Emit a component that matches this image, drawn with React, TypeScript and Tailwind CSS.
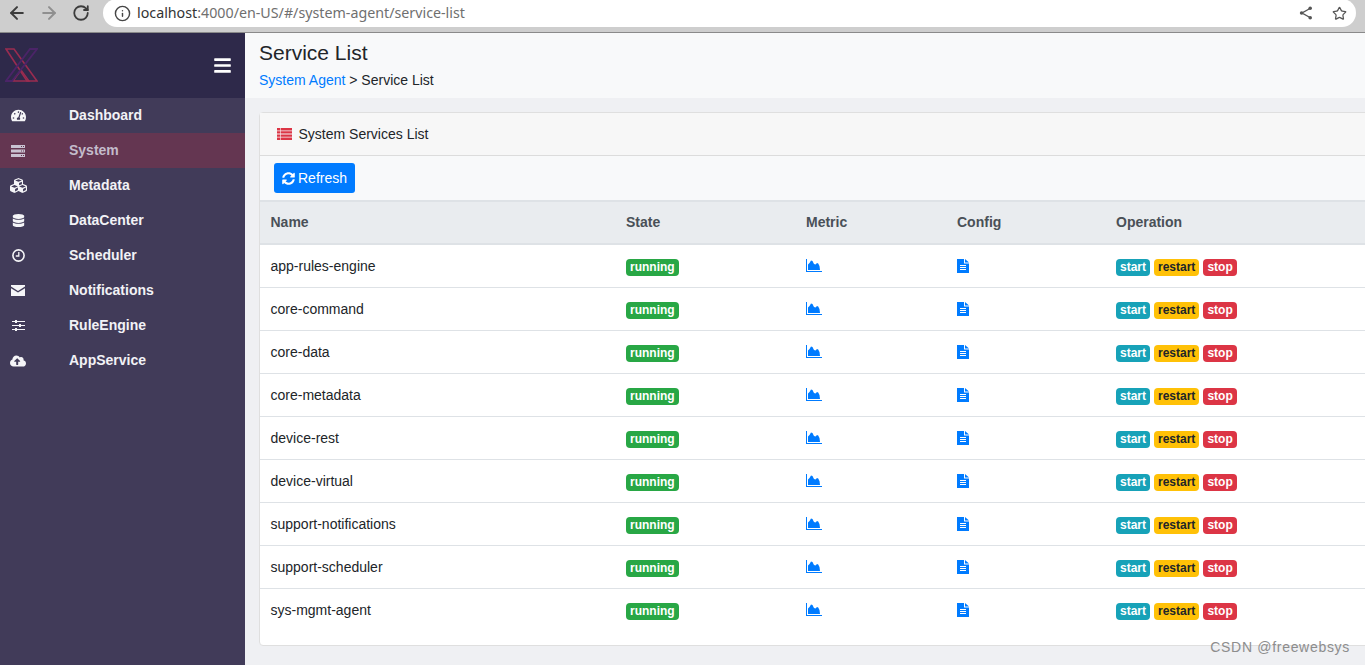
import React from 'react';
import {
  FaBars,
  FaCloudUploadAlt,
  FaCubes,
  FaDatabase,
  FaSyncAlt,
  FaTachometerAlt,
} from 'react-icons/fa';
import { ArrowLeft, ArrowRight, Info, RotateCw, Star } from 'lucide-react';

// font-awesome 4 style glyphs that the icon packages draw differently
function ServerIcon() {
  return (
    <svg viewBox="0 0 14 12" className="h-[12px] w-[14px]" fill="currentColor">
      <path fillRule="evenodd" d="M0 0h14v3H0zM10 1v1h1V1zM12 1v1h1V1zM0 4.5h14v3H0zM10 5.5v1h1v-1zM12 5.5v1h1v-1zM0 9h14v3H0zM10 10v1h1v-1zM12 10v1h1v-1z" />
    </svg>
  );
}

function ClockIcon() {
  return (
    <svg viewBox="0 0 13 13" className="h-[13px] w-[13px]" fill="none" stroke="currentColor">
      <circle cx="6.5" cy="6.5" r="5.6" strokeWidth="1.6" />
      <path d="M6.8 3v4H3.8" strokeWidth="1.3" />
    </svg>
  );
}

function EnvelopeIcon() {
  return (
    <svg viewBox="0 0 14 11" className="h-[11px] w-[14px]" fill="currentColor">
      <path d="M0 0h14v1.6L7 6 0 1.6zM0 3.2 7 7.6l7-4.4V11H0z" />
    </svg>
  );
}

function SlidersIcon() {
  return (
    <svg viewBox="0 0 13 11" className="h-[11px] w-[13px]" fill="currentColor">
      <path d="M0 1h3V0h2v1h8v1H5v1H3V2H0zM0 5h7V4h2v1h4v1H9v1H7V6H0zM0 9h3V8h2v1h8v1H5v1H3v-1H0z" />
    </svg>
  );
}

function ListIcon() {
  return (
    <svg viewBox="0 0 15 12" className="h-[12px] w-[15px]" fill="#dc3545">
      <path d="M0 0h3.4v2.4H0zM4 0h11v2.4H4zM0 3.2h3.4v2.4H0zM4 3.2h11v2.4H4zM0 6.4h3.4v2.4H0zM4 6.4h11v2.4H4zM0 9.6h3.4V12H0zM4 9.6h11V12H4z" />
    </svg>
  );
}

function AreaChartIcon() {
  return (
    <svg viewBox="0 0 16 13" className="h-[13px] w-[16px]" fill="#007bff">
      <path d="M0 0h1v12h15v1H0z" />
      <path d="M2 11V5.5l1.5-1.5L5 1.5 6.5 2l1.5 3 1.5.5L11 4l1.2.5 1.3 2.5.5 4z" />
    </svg>
  );
}

function FileIcon() {
  return (
    <svg viewBox="0 0 12 14" className="h-[14px] w-[12px]" fill="#007bff">
      <path fillRule="evenodd" d="M0 0h7v4.5h5V14H0zM3 6v1h6V6zM3 8v1h6V8zM3 10v1h6v-1z" />
      <path d="M8 0l4 3.5H8z" />
    </svg>
  );
}

const navItems = [
  { label: 'Dashboard', icon: <FaTachometerAlt size={15} /> },
  { label: 'System', icon: <ServerIcon />, active: true },
  { label: 'Metadata', icon: <FaCubes size={17} /> },
  { label: 'DataCenter', icon: <FaDatabase size={13} /> },
  { label: 'Scheduler', icon: <ClockIcon /> },
  { label: 'Notifications', icon: <EnvelopeIcon /> },
  { label: 'RuleEngine', icon: <SlidersIcon /> },
  { label: 'AppService', icon: <FaCloudUploadAlt size={16} /> },
];

const services = [
  'app-rules-engine',
  'core-command',
  'core-data',
  'core-metadata',
  'device-rest',
  'device-virtual',
  'support-notifications',
  'support-scheduler',
  'sys-mgmt-agent',
];

function Badge({ className, children }: { className: string; children: React.ReactNode }) {
  return (
    <span className={`inline-block h-[17px] rounded-[4px] px-[4px] text-[12px] font-bold leading-[17px] ${className}`}>
      {children}
    </span>
  );
}

export default function App() {
  return (
    <div className="relative flex h-[665px] w-[1365px] flex-col overflow-hidden font-['Liberation_Sans',Arial,sans-serif] text-[14px] text-[#212529]">
      {/* Browser bar */}
      <div className="flex h-[33px] shrink-0 items-center border-b border-[#8a8a8a] bg-[#cecece] pl-[7px]">
        <ArrowLeft size={20} strokeWidth={2.4} className="-translate-y-[3px] text-[#3c3c3c]" />
        <ArrowRight size={20} strokeWidth={2.4} className="ml-[12px] -translate-y-[3px] text-[#8f8f8f]" />
        <RotateCw size={18} strokeWidth={2.4} className="ml-[13px] -translate-y-[3px] text-[#3c3c3c]" />
        <div className="ml-[13px] flex h-[28px] w-[1253px] -translate-y-[3px] items-center rounded-[14px] bg-white pl-[11px] pr-[9px] font-['Noto_Sans',sans-serif] text-[14.25px]">
          <Info size={17} className="text-[#454545]" />
          <span className="ml-[6px] text-[#333333]">localhost</span>
          <span className="text-[#6f6f6f]">:4000/en-US/#/system-agent/service-list</span>
          <svg viewBox="0 0 14 14" className="ml-auto h-[14px] w-[14px]" fill="none" stroke="#555555">
            <path d="M11 2.5 3 7l8 4.5" strokeWidth="1.4" />
            <circle cx="11.2" cy="2.3" r="1.8" fill="#555555" stroke="none" />
            <circle cx="2.6" cy="7" r="1.8" fill="#555555" stroke="none" />
            <circle cx="11.2" cy="11.7" r="1.8" fill="#555555" stroke="none" />
          </svg>
          <Star size={15} strokeWidth={2} className="ml-[19px] text-[#555555]" />
        </div>
      </div>

      <div className="flex min-h-0 flex-1">
        {/* Sidebar */}
        <aside className="w-[245px] shrink-0 bg-[#413b59] text-[14px] font-bold text-[#f2f2f6]">
          <div className="flex h-[65px] items-center justify-between bg-[#2e294a] pl-[5px] pr-[13px]">
            <svg viewBox="0 0 33 34" className="mb-[1px] h-[34px] w-[33px]" fill="none">
              <path d="M1 1h8l23 32H22z" stroke="#9a2c50" strokeWidth="1.6" />
              <path d="M8 33l8-11 8 11z" stroke="#9a2c50" strokeWidth="1.4" />
              <path d="M32 1h-7L1 33h6z" stroke="#4b2468" strokeWidth="1.8" />
            </svg>
            <FaBars size={19} className="text-white" />
          </div>
          {navItems.map((item) => (
            <div
              key={item.label}
              className={`flex h-[35px] items-center ${item.active ? 'bg-[#643651] text-[#c3bccb]' : ''}`}
            >
              <span className={`flex w-[36px] shrink-0 justify-center ${item.active ? 'text-[#c9c3d2]' : 'text-[#f5f5f8]'}`}>
                {item.icon}
              </span>
              <span className="ml-[33px]">{item.label}</span>
            </div>
          ))}
        </aside>

        {/* Main */}
        <main className="min-w-0 flex-1 bg-[#eff0f3]">
          <div className="h-[65px] bg-[#f8f9fa] pl-[14px] pt-[6px]">
            <h1 className="text-[21px] leading-[28px] text-[#212529]">Service List</h1>
            <div className="mt-[3px] leading-[20px]">
              <span className="text-[#007bff]">System Agent</span> &gt; Service List
            </div>
          </div>

          <div className="ml-[14px] mr-[-12px] mt-[14px] h-[534px] rounded-[4px] border border-[#dfdfdf] bg-white">
            <div className="flex h-[43px] items-center border-b border-[#dcdcdc] bg-[#f7f7f7] pl-[17px]">
              <ListIcon />
              <span className="ml-[6.5px]">System Services List</span>
            </div>
            <div className="flex h-[44px] items-center bg-[#f8f9fa] pl-[14px]">
              <button className="flex h-[30px] w-[81px] items-center justify-center gap-[3px] rounded-[3px] bg-[#007bff] text-[14px] text-white">
                <FaSyncAlt size={13} />
                Refresh
              </button>
            </div>
            <table className="w-full table-fixed border-collapse">
              <colgroup>
                <col className="w-[356px]" />
                <col className="w-[180px]" />
                <col className="w-[151px]" />
                <col className="w-[159px]" />
                <col />
              </colgroup>
              <thead>
                <tr className="h-[43px] border-y-2 border-t-[#dee2e6] border-b-[#dee2e6] bg-[#e9ecef] text-left font-bold text-[#495057]">
                  <th className="px-[10.5px]">Name</th>
                  <th className="px-[10px]">State</th>
                  <th className="px-[10px]">Metric</th>
                  <th className="px-[10px]">Config</th>
                  <th className="px-[10px]">Operation</th>
                </tr>
              </thead>
              <tbody>
                {services.map((name, i) => (
                  <tr key={name} className={`h-[43px] ${i < services.length - 1 ? 'border-b border-[#dee2e6]' : ''}`}>
                    <td className="px-[10.5px] pt-[2px]">{name}</td>
                    <td className="px-[10px] pt-[2px]">
                      <Badge className="bg-[#28a745] text-white">running</Badge>
                    </td>
                    <td className="px-[10px]">
                      <AreaChartIcon />
                    </td>
                    <td className="px-[10px]">
                      <FileIcon />
                    </td>
                    <td className="px-[10px] pt-[2px]">
                      <Badge className="mr-[4px] bg-[#17a2b8] text-white">start</Badge>
                      <Badge className="mr-[4px] bg-[#ffc107] text-[#212529]">restart</Badge>
                      <Badge className="bg-[#dc3545] text-white">stop</Badge>
                    </td>
                  </tr>
                ))}
              </tbody>
            </table>
          </div>
        </main>
      </div>

      <span className="absolute bottom-[7px] right-[15px] text-[14px] tracking-[0.7px] text-[#8d8d8d]">CSDN @freewebsys</span>
    </div>
  );
}
